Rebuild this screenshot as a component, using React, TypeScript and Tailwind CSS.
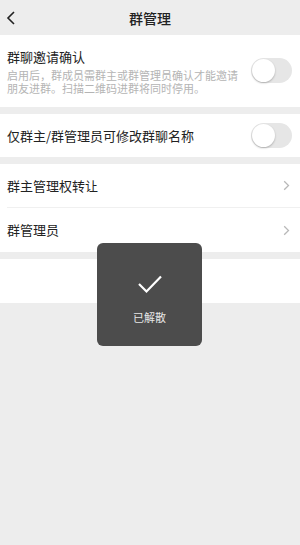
import React from "react";

const Toggle = () => (
  <div className="relative h-[25px] w-[41px] shrink-0 rounded-full bg-[#e6e6e6]">
    <div className="absolute left-[1px] top-[1px] h-[23px] w-[23px] rounded-full bg-white shadow-[0_1px_2px_rgba(0,0,0,0.25)]" />
  </div>
);

const Chevron = () => (
  <svg width="7" height="11" viewBox="0 0 7 11" className="shrink-0">
    <path d="M1.2 1.2 L5.5 5.5 L1.2 9.8" fill="none" stroke="#b8b8b8" strokeWidth="1.3" />
  </svg>
);

export default function App() {
  return (
    <div
      className="relative h-[545px] w-[300px] overflow-hidden bg-[#ededed] text-[#222222]"
      style={{ fontFamily: '"Noto Sans CJK SC", "Noto Sans", sans-serif' }}
    >
      {/* nav */}
      <div className="relative flex h-[35px] items-center justify-center">
        <svg width="10" height="14" viewBox="0 0 10 14" className="absolute left-[6px] top-[11px]">
          <path d="M8 1 L2 7 L8 13" fill="none" stroke="#222" strokeWidth="1.6" />
        </svg>
        <span className="text-[14px] font-medium leading-none">群管理</span>
      </div>

      {/* section 1 */}
      <div className="flex h-[72px] items-start bg-white pl-[7px] pr-[8px]">
        <div className="flex-1 pt-[13px]">
          <div className="text-[13px] leading-[18px]">群聊邀请确认</div>
          <div className="mt-[3px] w-[240px] text-[11px] leading-[13px] text-[#b4b4b4]">
            启用后，群成员需群主或群管理员确认才能邀请朋友进群。扫描二维码进群将同时停用。
          </div>
        </div>
        <div className="mt-[23px]">
          <Toggle />
        </div>
      </div>

      <div className="h-[7px]" />

      {/* section 2 */}
      <div className="flex h-[43px] items-center justify-between bg-white pl-[7px] pr-[8px]">
        <span className="text-[13px]">仅群主/群管理员可修改群聊名称</span>
        <Toggle />
      </div>

      <div className="h-[7px]" />

      {/* section 3 */}
      <div className="bg-white pl-[7px]">
        <div className="flex h-[44px] items-center justify-between border-b border-[#f0f0f0] pr-[10px]">
          <span className="text-[13px]">群主管理权转让</span>
          <Chevron />
        </div>
        <div className="flex h-[44px] items-center justify-between pr-[10px]">
          <span className="text-[13px]">群管理员</span>
          <Chevron />
        </div>
      </div>

      <div className="h-[7px]" />
      <div className="h-[44px] bg-white" />

      {/* toast */}
      <div className="absolute left-[97px] top-[243px] flex h-[103px] w-[105px] flex-col items-center rounded-[6px] bg-[#4c4c4c]">
        <svg width="26" height="20" viewBox="0 0 26 20" className="mt-[31px]">
          <path d="M2 10 L9.5 17.5 L24 2.5" fill="none" stroke="#ffffff" strokeWidth="2.2" />
        </svg>
        <span className="mt-[18px] text-[11px] leading-none text-[#e6e6e6]">已解散</span>
      </div>
    </div>
  );
}
